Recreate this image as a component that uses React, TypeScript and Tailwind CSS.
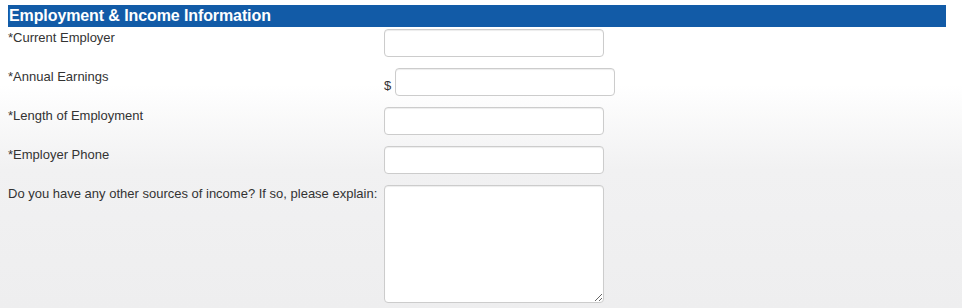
import React from "react";

const rows = [
  { label: "*Current Employer", prefix: false },
  { label: "*Annual Earnings", prefix: true },
  { label: "*Length of Employment", prefix: false },
  { label: "*Employer Phone", prefix: false },
];

const inputCls =
  "h-[28px] w-[220px] rounded-[4px] border border-[#cccccc] bg-white shadow-[inset_0_1px_1px_rgba(0,0,0,0.075)] outline-none";

export default function App() {
  return (
    <div
      className="h-[308px] w-[962px] bg-[linear-gradient(to_bottom,#ffffff_0px,#ffffff_85px,#f1f1f2_170px,#eeeeef_308px)] text-[#333333]"
      style={{ fontFamily: '"Liberation Sans", Arial, sans-serif' }}
    >
      <div className="px-2 pt-[5px]">
        <div className="h-[22px] w-[938px] bg-[#125ba7] pl-[1px] text-[16px] font-bold leading-[22px] tracking-[-0.1px] text-white">
          Employment &amp; Income Information
        </div>
        <div className="flex flex-col gap-[11px] pt-[2px]">
          {rows.map((r) => (
            <div key={r.label} className="flex">
              <div className="w-[376px] pt-[1px] text-[13px] leading-[15px]">{r.label}</div>
              {r.prefix ? (
                <div className="flex items-end">
                  <span className="mb-[3px] w-[11px] text-[13px] leading-[15px]">$</span>
                  <input className={inputCls} />
                </div>
              ) : (
                <input className={inputCls} />
              )}
            </div>
          ))}
          <div className="flex">
            <div className="w-[376px] pt-[1px] text-[13px] leading-[15px]">
              Do you have any other sources of income? If so, please explain:
            </div>
            <textarea className="h-[118px] w-[220px] rounded-[4px] border border-[#cccccc] bg-white shadow-[inset_0_1px_1px_rgba(0,0,0,0.075)] outline-none" />
          </div>
        </div>
      </div>
    </div>
  );
}
